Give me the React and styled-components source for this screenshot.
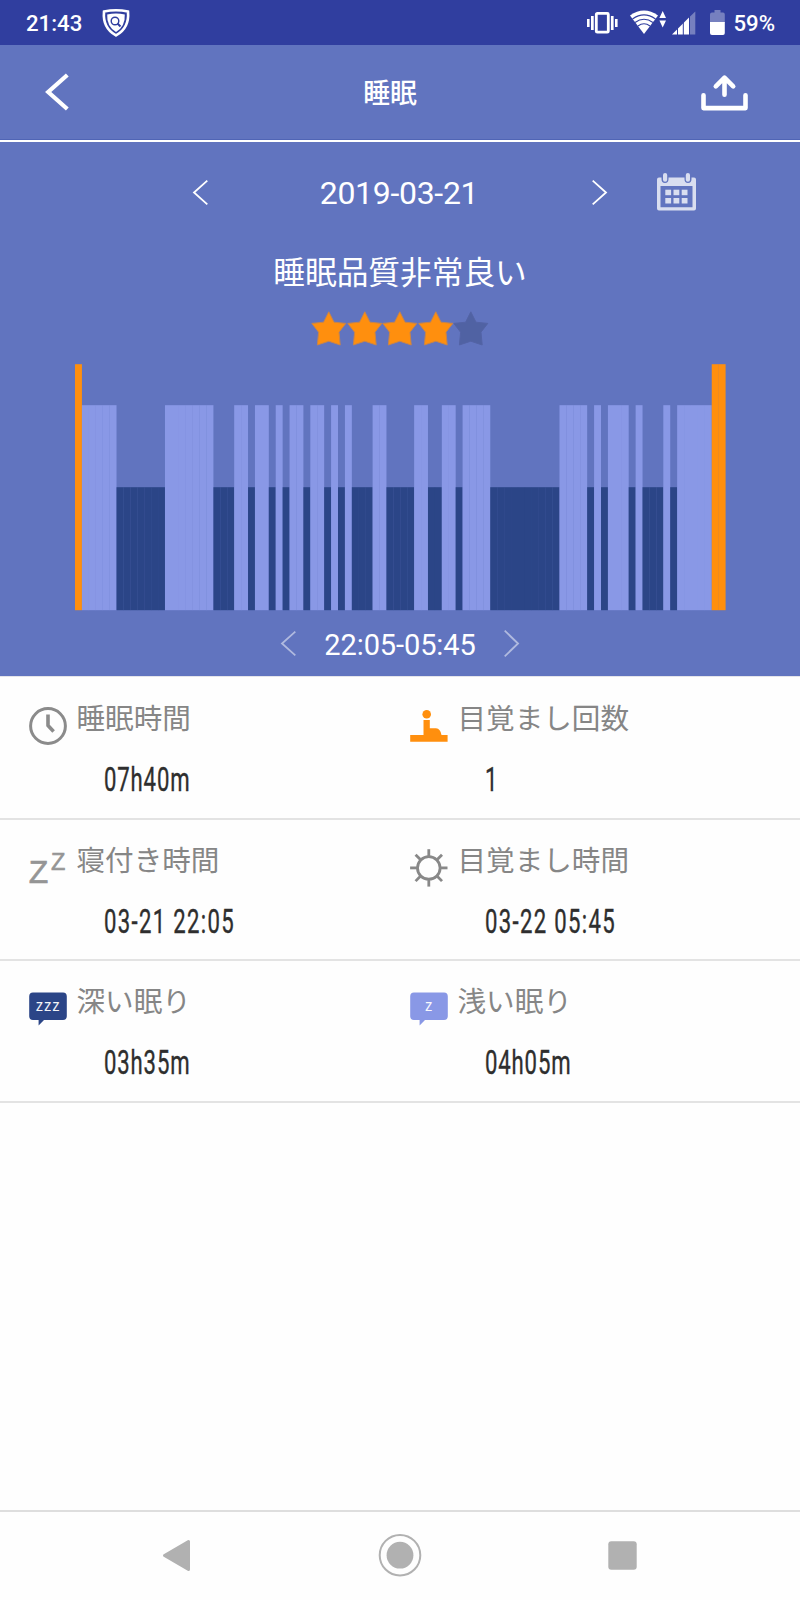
import React from 'react';
import styled, { createGlobalStyle } from 'styled-components';

const GlobalStyle = createGlobalStyle`
  * { box-sizing: border-box; }
  body { margin: 0; background: #fefefe; }
  svg { display: block; flex: none; overflow: visible; }
`;

const Screen = styled.div`
  width: 800px;
  height: 1600px;
  display: flex;
  flex-direction: column;
  background: #fefefe;
  font-family: Roboto, 'Noto Sans CJK JP', sans-serif;
  color: #fff;
`;

const StatusBar = styled.div`
  height: 45px;
  flex: none;
  display: flex;
  align-items: center;
  padding: 2px 25px 0 26px;
  background: #303e9f;
  font-size: 22.2px;
  font-weight: 500;
  line-height: 43px;
`;

const StatusIcon = styled.svg`
  margin: 0 0 2px ${(p) => p.$gap}px;
`;

const Percent = styled.span`
  margin-left: 8.5px;
`;

const Spacer = styled.div`
  flex: 1;
`;

const Header = styled.header`
  height: 97px;
  flex: none;
  display: flex;
  align-items: center;
  justify-content: space-between;
  padding: 0 52px 0 45px;
  background: #6174bf;
  border-bottom: 2px solid #fff;
  box-shadow: inset 0 -1px 0 #5065b5;
`;

const BackIcon = styled.svg`
  margin-bottom: 2px;
`;

const Title = styled.h1`
  margin: 0 -10px 0 0;
  padding-top: 2px;
  font-size: 26.8px;
  line-height: 40px;
  font-weight: 500;
`;

const Hero = styled.section`
  height: 534px;
  flex: none;
  display: flex;
  flex-direction: column;
  align-items: center;
  background: #6174bf;
`;

const DateRow = styled.div`
  width: 100%;
  height: 102px;
  display: flex;
  align-items: center;
  padding-left: 193px;
`;

const DateText = styled.div`
  width: 384px;
  padding: 1px 2px 0 0;
  text-align: center;
  font-size: 32px;
  letter-spacing: -0.3px;
`;

const CalendarIcon = styled.svg`
  margin: 0 0 2px 50px;
`;

const Quality = styled.div`
  height: 60px;
  line-height: 59px;
  font-size: 31.7px;
`;

const Stars = styled.div`
  display: flex;
  margin: 7px 0 18.3px;
`;

const RangeRow = styled.div`
  height: 66px;
  display: flex;
  align-items: center;
  gap: 27px;
  font-size: 29px;
`;

const RangeText = styled.span`
  padding-top: 3px;
  width: 154px;
  text-align: center;
  letter-spacing: -0.1px;
`;

const Details = styled.main`
  flex: 1;
  padding-top: 1px;
  border-top: 1px solid #e4e4ea;
`;

const DetailRow = styled.div`
  height: 141.5px;
  display: grid;
  grid-template-columns: 381px 1fr;
  padding-left: 28.7px;
  border-bottom: 2px solid #e3e3e3;
`;

const Metric = styled.div`
  display: flex;
  flex-direction: column;
`;

const MetricHead = styled.div`
  display: flex;
  align-items: flex-start;
  gap: 9.8px;
  height: 69px;
  padding-top: 20px;
`;

const IconSlot = styled.div`
  width: 38px;
  padding-top: 9px;
`;

const Label = styled.span`
  font-size: 28.6px;
  line-height: 42px;
  font-weight: 400;
  color: #868686;
`;

const Value = styled.span`
  align-self: flex-start;
  margin-left: 75.7px;
  font-size: 33.5px;
  line-height: 66px;
  white-space: pre;
  color: #2e2e2e;
  letter-spacing: ${(p) => p.$spacing}px;
  -webkit-text-stroke: 0.4px #2e2e2e;
  transform: scaleX(0.66);
  transform-origin: left center;
`;

const NavBar = styled.nav`
  height: 90px;
  flex: none;
  display: flex;
  align-items: center;
  justify-content: space-between;
  padding: 0 163px 2px;
  border-top: 2px solid #dedede;
`;

const Chevron = ({ right, height = 25, opacity = 1 }) => (
  <svg width="15" height={height} viewBox="0 0 15 25" preserveAspectRatio="none">
    <path
      d={right ? 'M.7 .6 14 12.5 .7 24.4' : 'M14.3 .6 1 12.5 14.3 24.4'}
      fill="none"
      stroke="#fff"
      strokeWidth="1.8"
      opacity={opacity}
    />
  </svg>
);

const STAR = 'M17.8 .8 23 11.2 34.8 12.4 28 21.2 29.2 34 17.8 30.2 6.4 34 7.6 21.2 .8 12.4 12.6 11.2Z';

const Star = ({ filled }) => (
  <svg width="35.6" height="35" viewBox="0 0 35.6 35">
    <path
      d={STAR}
      fill={filled ? '#ff8f0e' : '#5062a3'}
      stroke={filled ? '#c98548' : '#5363a6'}
      strokeWidth="1"
      strokeLinejoin="round"
    />
  </svg>
);

const STAGES = {
  A: { height: 246, color: '#ff8f0e' },
  L: { height: 205, color: '#8998e6' },
  D: { height: 123, color: '#2b4587' },
};

const SLEEP =
  'A1 L5 D7 L7 D3 L2 D1 L2 D1 L1 D1 L2 D1 L2 D1 L1 D1 L1 D3 L2 D4 L2 D2 L2 D1 L4 D10 L4 D1 L1 D1 L3 D1 L1 D3 L1 D1 L5 A2'
    .split(' ')
    .flatMap((run) => Array(Number(run.slice(1))).fill(run[0]));

const UNIT = 650.6 / SLEEP.length;

const SleepChart = () => (
  <svg width="650.6" height="246" viewBox="0 0 650.6 246">
    {SLEEP.map((stage, i) => {
      const { height, color } = STAGES[stage];
      const joined = SLEEP[i + 1] === stage;
      return (
        <rect
          key={i}
          x={i * UNIT}
          y={246.2 - height}
          width={UNIT + (joined ? 0.15 : 0)}
          height={height}
          fill={color}
        />
      );
    })}
  </svg>
);

const Bubble = ({ color, text }) => (
  <svg width="38" height="38" viewBox="0 -2 38 38">
    <path d="M4 .5H34Q37.8 .5 37.8 4.5V24Q37.8 28 34 28H15L9.6 33.6V28H4Q.2 28 .2 24V4.5Q.2 .5 4 .5Z" fill={color} />
    <text
      x="19.2"
      y="18.7"
      textAnchor="middle"
      fontFamily="Noto Sans, sans-serif"
      fontSize="15.5"
      letterSpacing="1"
      fill="#fff"
      opacity=".95"
    >
      {text}
    </text>
  </svg>
);

const ClockIcon = () => (
  <svg width="38" height="38" viewBox="0 0 38 38" fill="none" stroke="#8b8b8b">
    <circle cx="19" cy="19" r="17.4" strokeWidth="3" />
    <path d="M19 7.5V18.6L24.6 24.6" strokeWidth="3.6" strokeLinejoin="round" />
  </svg>
);

const WakeIcon = () => (
  <svg width="38" height="38" viewBox="0 0 38 38" fill="#ff8f0e">
    <circle cx="16.7" cy="7.2" r="4.3" />
    <path d="M13.5 13H19.8V21.3H26Q30.5 21.8 31.5 28H37.6V34.8H.2V28H13.5Z" />
  </svg>
);

const SleepIcon = () => (
  <svg
    width="38"
    height="38"
    viewBox="0 0 38 38"
    fill="#959595"
    stroke="#959595"
    strokeWidth=".6"
    fontFamily="Liberation Sans, sans-serif"
  >
    <text x="-.3" y="34.3" fontSize="32">Z</text>
    <text x="22" y="20.8" fontSize="23.5">Z</text>
  </svg>
);

const SunIcon = () => (
  <svg width="38" height="38" viewBox="0 0 38 38" fill="none" stroke="#888" strokeWidth="2.8">
    <circle cx="18.8" cy="18.9" r="11.3" />
    {[0, 45, 90, 135, 180, 225, 270, 315].map((angle) => (
      <path key={angle} d="M18.8 .2V7.700" transform={`rotate(${angle} 18.8 18.9)`} />
    ))}
  </svg>
);

const METRICS = [
  [
    { icon: <ClockIcon />, label: '睡眠時間', value: '07h40m', spacing: 1.3 },
    { icon: <WakeIcon />, label: '目覚まし回数', value: '1', spacing: 0 },
  ],
  [
    { icon: <SleepIcon />, label: '寝付き時間', value: '03-21 22:05', spacing: 2 },
    { icon: <SunIcon />, label: '目覚まし時間', value: '03-22 05:45', spacing: 2 },
  ],
  [
    { icon: <Bubble color="#2b4587" text="zzz" />, label: '深い眠り', value: '03h35m', spacing: 1.3 },
    { icon: <Bubble color="#8998e6" text="z" />, label: '浅い眠り', value: '04h05m', spacing: 1.3 },
  ],
];

export default function App() {
  return (
    <Screen>
      <GlobalStyle />
      <StatusBar>
        <span>21:43</span>
        <StatusIcon $gap={20} width="28" height="28" viewBox="0 0 28 28">
          <path d="M14 1.3Q20 1.3 26 2.6Q27.5 19 14 26.4Q.5 19 2 2.6Q8 1.3 14 1.3Z" fill="none" stroke="#fff" strokeWidth="2.6" />
          <path d="M14 4.6Q18.5 4.6 22.8 5.5Q23.4 17.5 14 23Q4.6 17.5 5.2 5.5Q9.5 4.6 14 4.6Z" fill="#fff" />
          <circle cx="13" cy="12" r="3.8" fill="none" stroke="#303e9f" strokeWidth="1.4" />
          <path d="M15.5 14.5 18.5 17.5" stroke="#303e9f" strokeWidth="2" />
        </StatusIcon>
        <Spacer />
        <StatusIcon $gap={0} width="31" height="24" viewBox="0 0 31 24" fill="#fff">
          <rect x="9.3" y="2.4" width="12" height="18.8" rx="1" fill="none" stroke="#fff" strokeWidth="2.8" />
          <path d="M4 5h2.700v14H4zM0 8h2.600v8H0zM23.900 5h2.700v14h-2.700zM28 8h2.600v8H28z" />
        </StatusIcon>
        <StatusIcon $gap={12} width="37" height="25" viewBox="0 0 37 25">
          <path d="M14 24 0 5.5Q14-4.5 28 5.5Z" fill="#fff" />
          <g fill="none" stroke="#303e9f" strokeWidth="1.1">
            <path d="M2.5 9Q14 .8 25.5 9" />
            <path d="M5 12.5Q14 6 23 12.5" />
            <path d="M8 16Q14 11.5 20 16" />
          </g>
          <path d="M32.7 1 36 8H29.4ZM29.4 10.5H36L32.7 17.5Z" fill="#fff" />
        </StatusIcon>
        <StatusIcon $gap={5} width="24" height="24" viewBox="0 0 24 24">
          <path d="M0 23.5 17.5 6V23.5Z" fill="#fff" />
          <path d="M17.5 6 23.3 .5V23.5H17.5Z" fill="#7680bf" />
          <path d="M5.5 14V24M11.3 8V24M17.5 2V24" stroke="#303e9f" strokeWidth="1" />
        </StatusIcon>
        <StatusIcon $gap={14} width="15" height="25" viewBox="0 0 15 25">
          <path d="M4.5 0H10.5V2.5H13Q14.8 2.5 14.8 4.5V13H0V4.5Q0 2.5 2 2.5H4.5Z" fill="#7680bf" />
          <path d="M0 12H14.8V23Q14.8 25 13 25H2Q0 25 0 23Z" fill="#fff" />
        </StatusIcon>
        <Percent>59%</Percent>
      </StatusBar>

      <Header>
        <BackIcon width="24" height="38" viewBox="0 0 24 38">
          <path d="M22.3 2 3.2 19 22.3 36" fill="none" stroke="#fff" strokeWidth="4.2" strokeLinecap="butt" strokeLinejoin="miter" />
        </BackIcon>
        <Title>睡眠</Title>
        <svg width="47" height="36" viewBox="0 0 47 36" fill="none" stroke="#fff" strokeLinecap="round" strokeLinejoin="round">
          <path d="M2.5 20.3V33.1H44.5V20.3" strokeWidth="4.6" />
          <path d="M23.5 19.8V3.5M14.8 11.3 23.5 2.6 32.2 11.3" strokeWidth="4.6" />
        </svg>
      </Header>

      <Hero>
        <DateRow>
          <Chevron />
          <DateText>2019-03-21</DateText>
          <Chevron right />
          <CalendarIcon width="39" height="38" viewBox="0 0 39 38" fill="#d9def0">
            <path
              fillRule="evenodd"
              d="M2 4.5H4.5V6Q4.5 10 8 10Q11.5 10 11.5 6V4.5H27.5V6Q27.5 10 31 10Q34.5 10 34.5 6V4.5H37Q39 4.5 39 6.5V35.5Q39 37.5 37 37.5H2Q0 37.5 0 35.5V6.5Q0 4.5 2 4.5ZM3.5 13V34.3H35.5V13Z"
            />
            <rect x="6" y="0" width="4.2" height="8.8" rx="2.1" />
            <rect x="28.8" y="0" width="4.2" height="8.8" rx="2.1" />
            {[8.3, 16.5, 24.7].map((x) =>
              [16.7, 25].map((y) => <rect key={`${x}-${y}`} x={x} y={y} width="5.8" height="5.5" />)
            )}
          </CalendarIcon>
        </DateRow>
        <Quality>睡眠品質非常良い</Quality>
        <Stars>
          {[1, 2, 3, 4, 5].map((n) => (
            <Star key={n} filled={n <= 4} />
          ))}
        </Stars>
        <SleepChart />
        <RangeRow>
          <Chevron opacity={0.5} />
          <RangeText>22:05-05:45</RangeText>
          <Chevron right height={27} opacity={0.5} />
        </RangeRow>
      </Hero>

      <Details>
        {METRICS.map((row, i) => (
          <DetailRow key={i}>
            {row.map(({ icon, label, value, spacing }) => (
              <Metric key={label}>
                <MetricHead>
                  <IconSlot>{icon}</IconSlot>
                  <Label>{label}</Label>
                </MetricHead>
                <Value $spacing={spacing}>{value}</Value>
              </Metric>
            ))}
          </DetailRow>
        ))}
      </Details>

      <NavBar>
        <svg width="27" height="31" viewBox="0 0 27 31">
          <path d="M25.5 1.5V29.5L1.5 15.5Z" fill="#b1b1b1" stroke="#b1b1b1" strokeWidth="3" strokeLinejoin="round" />
        </svg>
        <svg width="43" height="43" viewBox="0 0 43 43">
          <circle cx="22" cy="21.2" r="20.3" fill="none" stroke="#b1b1b1" strokeWidth="2" />
          <circle cx="22" cy="21.2" r="13.4" fill="#b1b1b1" />
        </svg>
        <svg width="29" height="29" viewBox="0 0 29 29">
          <rect x=".3" y=".3" width="28.4" height="28.4" rx="3" fill="#b1b1b1" />
        </svg>
      </NavBar>
    </Screen>
  );
}
